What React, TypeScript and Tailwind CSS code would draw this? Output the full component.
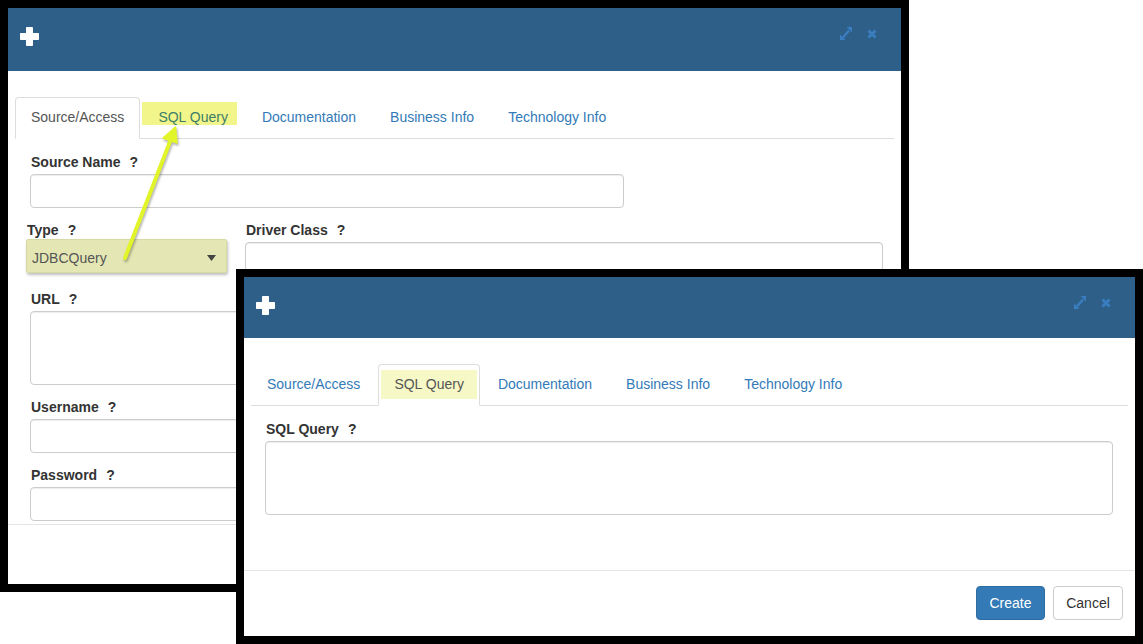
import React from "react";

const font = "font-['Liberation_Sans',Arial,Helvetica,sans-serif]";

const tabNames = ["Source/Access", "SQL Query", "Documentation", "Business Info", "Technology Info"];

function PlusIcon() {
  return (
    <svg width="19" height="19" viewBox="0 0 19 19" className="block">
      <path d="M6.5 0.5h6v6h6v6h-6v6h-6v-6h-6v-6h6z" fill="#fff" stroke="#fff" strokeWidth="1" strokeLinejoin="round" />
    </svg>
  );
}

function HeaderIcons() {
  return (
    <div className="flex items-start gap-[15px]">
      <svg width="12" height="13" viewBox="0 0 12 13" className="block" fill="#3a7dc0">
        <path d="M3 10.5 9 3.5" stroke="#3a7dc0" strokeWidth="2.4" />
        <path d="M12 0v5.5L6.5 0z" />
        <path d="M0 13V7.5L5.5 13z" />
      </svg>
      <svg width="10" height="10" viewBox="0 0 10 10" className="mt-[2px] block">
        <path d="M1.5 1.5l7 7M8.5 1.5l-7 7" stroke="#3a7dc0" strokeWidth="3" />
      </svg>
    </div>
  );
}

function Header({ h }: { h: string }) {
  return (
    <div className={`flex shrink-0 items-start justify-between bg-[#2d5f88] pl-[12px] pr-[24px] pt-[19px] ${h}`}>
      <PlusIcon />
      <HeaderIcons />
    </div>
  );
}

function Tabs({ active, second }: { active: number; second: "mark" | "active" }) {
  return (
    <div className="flex border-b border-[#ddd]">
      {tabNames.map((name, i) => {
        const isActive = i === active;
        return (
          <div
            key={name}
            className={`relative -mb-px mr-[2px] rounded-t-[4px] border px-[15px] pb-[11px] pt-[9px] text-[14px] leading-[20px] ${
              isActive ? "border-[#ddd] border-b-white bg-white text-[#555]" : "border-transparent text-[#337ab7]"
            }`}
          >
            {i === 1 && second === "mark" && (
              <span className="absolute -left-px top-[4px] h-[23px] w-[95px] bg-[#f2f68a]" />
            )}
            {i === 1 && second === "active" && (
              <span className="absolute left-[2px] top-[5px] h-[29px] w-[96px] bg-[#f6f8c6]" />
            )}
            <span className={`relative ${i === 1 && second === "mark" ? "text-[#3c7d68]" : ""}`}>{name}</span>
          </div>
        );
      })}
    </div>
  );
}

function Label({ text }: { text: string }) {
  return (
    <div className="mb-[2px] h-[20px] pl-[1px] text-[14px] font-bold leading-[20px] text-[#333]">
      {text}
      <span className="ml-[9px]">?</span>
    </div>
  );
}

const inputCls =
  "rounded-[4px] border border-[#ccc] bg-white shadow-[inset_0_1px_1px_rgba(0,0,0,0.075)]";

function SourceDialog() {
  return (
    <div className="flex h-[592px] w-[909px] flex-col border-8 border-black bg-white">
      <Header h="h-[63px]" />
      <div className="flex-1 px-[7px] pt-[26px]">
        <Tabs active={0} second="mark" />
        <div className="px-[15px] pt-[13px]">
          <Label text="Source Name" />
          <div className={`h-[34px] w-[594px] ${inputCls}`} />

          <div className="mt-[12px] flex">
            <div className="-ml-[4px] w-[201px] shrink-0">
              <div className="mb-[-1px] ml-[1px] h-[20px] text-[14px] font-bold leading-[20px] text-[#333]">
                Type<span className="ml-[9px]">?</span>
              </div>
              <div className="flex h-[34px] items-center justify-between rounded-[2px] border border-[#d8daa6] bg-[#e4e6b4] pl-[5px] pr-[10px] pt-[4px] text-[14px] text-[#555] shadow-[1px_2px_3px_rgba(0,0,0,0.25)]">
                <span>JDBCQuery</span>
                <svg width="9" height="6" viewBox="0 0 9 6" className="block">
                  <path d="M0 0h9L4.5 6z" fill="#444" />
                </svg>
              </div>
            </div>
            <div className="ml-[18px] w-[638px] shrink-0">
              <Label text="Driver Class" />
              <div className={`h-[34px] ${inputCls}`} />
            </div>
          </div>

          <div className="mt-[13px]">
            <Label text="URL" />
            <div className={`h-[74px] w-[594px] ${inputCls}`} />
          </div>
          <div className="mt-[12px]">
            <Label text="Username" />
            <div className={`h-[34px] w-[594px] ${inputCls}`} />
          </div>
          <div className="mt-[12px]">
            <Label text="Password" />
            <div className={`h-[34px] w-[594px] ${inputCls}`} />
          </div>
        </div>
      </div>
      <div className="h-[60px] shrink-0 border-t border-[#e5e5e5]" />
    </div>
  );
}

function QueryDialog() {
  return (
    <div className="absolute left-[236px] top-[269px] flex h-[375px] w-[907px] flex-col border-8 border-black bg-white">
      <Header h="h-[61px]" />
      <div className="flex-1 px-[7px] pt-[26px]">
        <Tabs active={1} second="active" />
        <div className="pl-[14px] pr-[15px] pt-[13px]">
          <Label text="SQL Query" />
          <div className={`h-[74px] ${inputCls}`} />
        </div>
      </div>
      <div className="flex h-[66px] shrink-0 items-start justify-end gap-[8px] border-t border-[#e5e5e5] pr-[12px] pt-[15px]">
        <button className="h-[34px] w-[69px] rounded-[4px] border border-[#2e6da4] bg-[#337ab7] text-[14px] text-white">
          Create
        </button>
        <button className="h-[34px] w-[70px] rounded-[4px] border border-[#ccc] bg-white text-[14px] text-[#333]">
          Cancel
        </button>
      </div>
    </div>
  );
}

function Arrow() {
  return (
    <svg
      width="200"
      height="280"
      viewBox="0 0 200 280"
      className="pointer-events-none absolute left-0 top-0 drop-shadow-[1px_2px_1px_rgba(0,0,0,0.3)]"
    >
      <path d="M125 258 171 139" stroke="#e2f52b" strokeWidth="4" strokeLinecap="round" />
      <path d="M175.5 127 177 143 163 138z" fill="#e2f52b" stroke="#e2f52b" strokeWidth="1.5" strokeLinejoin="round" />
    </svg>
  );
}

export default function App() {
  return (
    <div className={`relative h-[644px] w-[1143px] overflow-hidden bg-white ${font}`}>
      <SourceDialog />
      <Arrow />
      <QueryDialog />
    </div>
  );
}
